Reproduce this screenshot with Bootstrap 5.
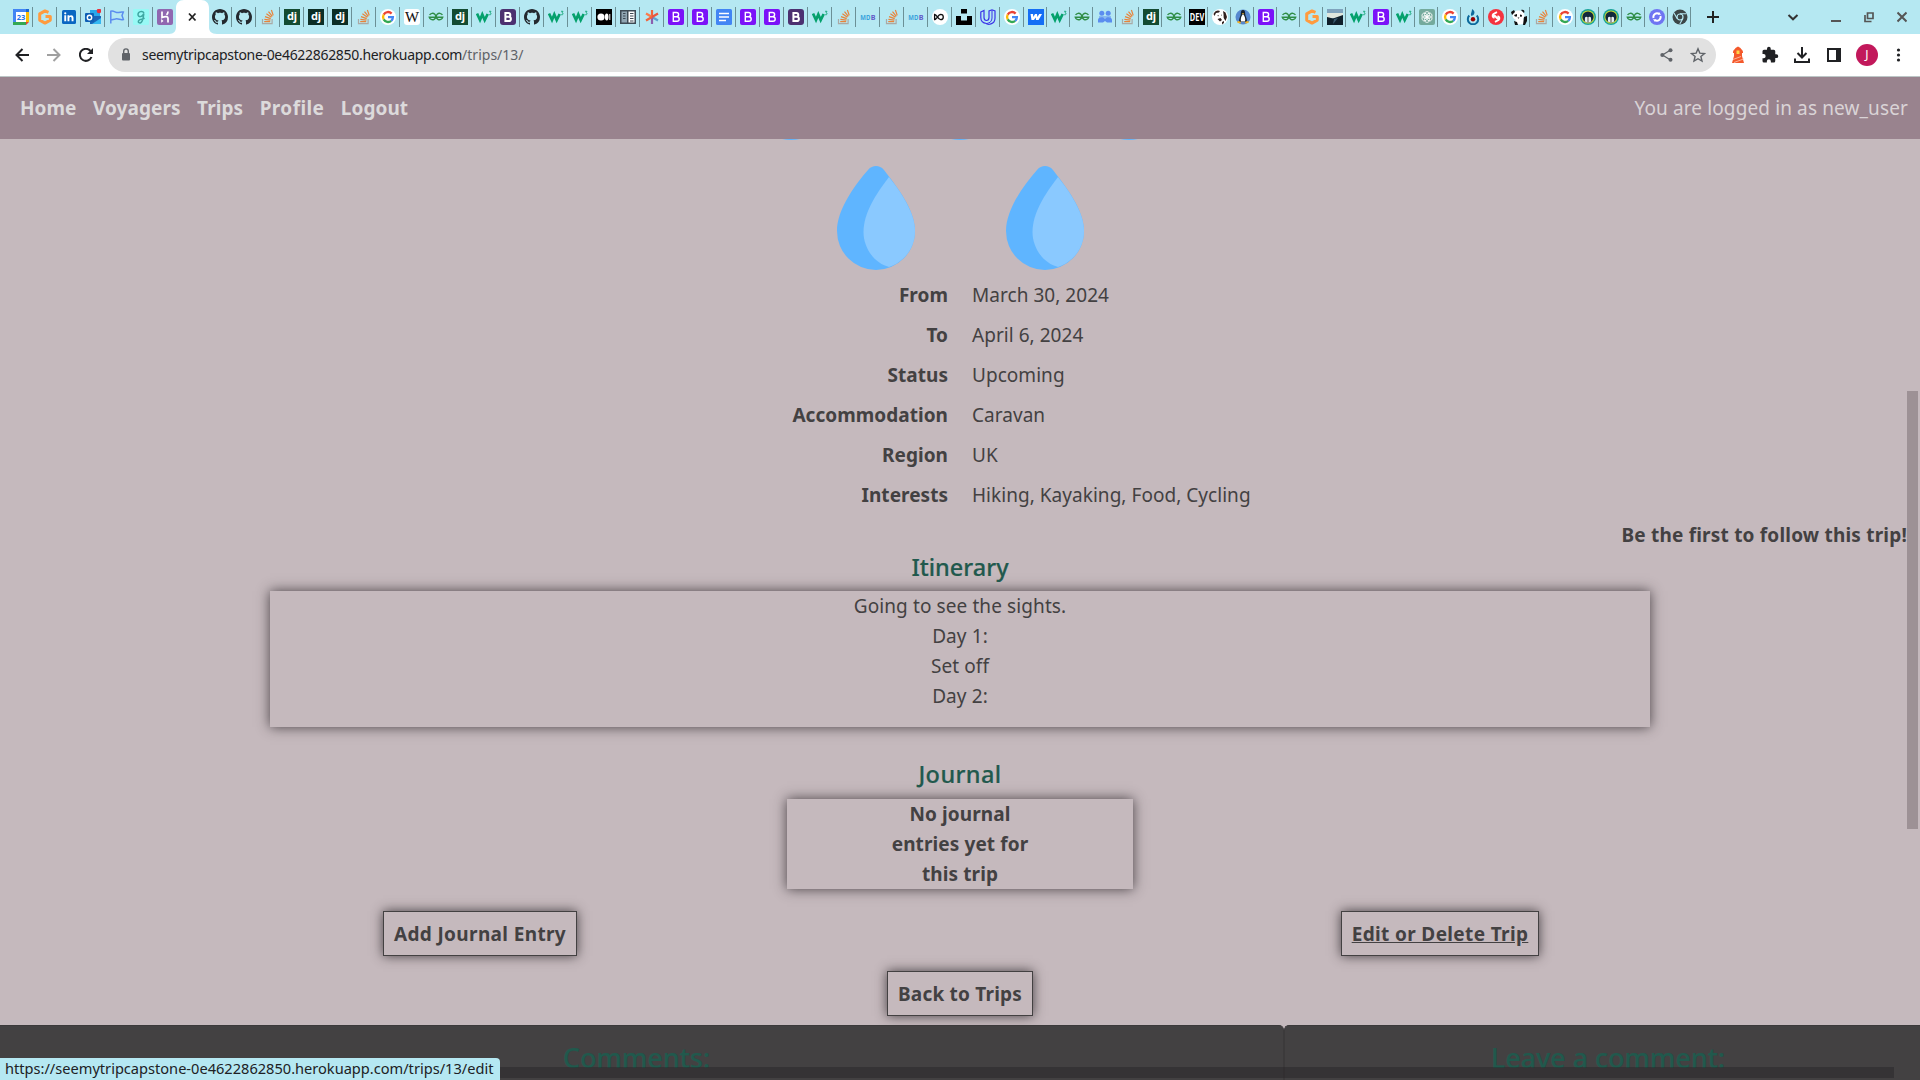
<!DOCTYPE html>
<html lang="en">
<head>
<meta charset="utf-8">
<title>See My Trip</title>
<link href="https://cdn.jsdelivr.net/npm/bootstrap@5.3.0/dist/css/bootstrap.min.css" rel="stylesheet">
<style>
:root{--ink:#434142;--page:#c5b9bd;--plum:#99838e;--pine:#21594d;--strip:#b5e8f2}
body{font-family:"Noto Sans","Open Sans",sans-serif;font-size:19px;line-height:30px;color:var(--ink);background:var(--page);height:1080px}
.tabstrip{height:34px;background:var(--strip);padding-left:9px}
.tb{width:24px;height:20px;margin-top:7px;padding-left:4px;border-right:1px solid #6b9096;flex:none;line-height:0}
.tb.nb{border-color:transparent}
.tb.sm{width:23px;padding-left:3.5px}
.tb svg{width:16px;height:16px;margin-top:2px}
.tabon{width:31px;height:34px;flex:none}
.tabon svg{margin-left:-8px}
.plus{margin-left:14px;margin-top:9px}
.win{margin-top:9px;margin-left:auto;margin-right:13px;gap:23px}
.bar{height:43px;background:#fff;border-bottom:1px solid #bcc6c6;padding:0 15px}
.bar .navi{width:78px}
.omni{height:34px;background:#e1e1e1;border-radius:17px;width:1608px;margin-left:15px;padding:0 10px 0 12px;font-size:14px;color:#5f6368;line-height:34px}
.omni b{font-weight:400;color:#202124;letter-spacing:-.31px}
.tools{gap:14px;margin-left:13px}
.ava{width:22px;height:22px;border-radius:50%;background:#c2185b;color:#fff;font-size:12px;line-height:22px;margin-left:-1px}
.sitenav{height:62px;background:var(--plum);padding:0 12px 0 20px;color:#d9d3d6;letter-spacing:.12px}
.sitenav a{color:#dcdadb;font-weight:700;text-decoration:none;letter-spacing:.06px}
.links{gap:16.5px}
.links .wide{letter-spacing:.4px}
.view{height:941px;overflow:hidden}
.drops{height:131px;overflow:hidden}
.drops>div{gap:91px;margin-top:26px}
.facts{padding-top:5px;letter-spacing:.04px}
.facts dt,.facts dd{height:40px;line-height:40px;margin:0;padding:0 12px}
.follow{padding:5px 13px 3px 0;letter-spacing:.2px}
.pine{color:var(--pine);font-weight:500;-webkit-text-stroke:.2px var(--pine);font-size:23.5px;line-height:29px;margin:0 0 9px}
.shade{box-shadow:0 0 12px rgba(40,34,37,.8)}
.plan{width:1380px;height:136px;margin-bottom:33px;letter-spacing:.1px}
.plan+.pine{margin-bottom:10px;letter-spacing:.4px}
.jour{width:346px;height:90px;margin-bottom:22px;letter-spacing:.1px}
.tripbtn{border:1px solid var(--ink);border-radius:0;padding:7px 10px 6px;font-size:19px;line-height:30px;font-weight:700;color:var(--ink);letter-spacing:.36px;box-shadow:0 0 11px rgba(40,34,37,.8)}
.backrow{padding:15px 0 9px}
.backrow .tripbtn{letter-spacing:.2px}
.darkpane{background:#434142;height:70px;border:1px solid #3c3a3b;padding-top:15px}
.darkpane .pine{font-size:27px;line-height:34px;letter-spacing:-.08px}
.pane-a{width:1284px;padding-right:10px;border-left:0;border-top-right-radius:5px}
.pane-b{width:636px;padding-left:11px;border-right:0;border-top-left-radius:5px}
.vbar{right:2px;top:391px;width:11px;height:438px;background:#9d9195}
.hbar{left:0;top:1067px;width:1894px;height:11px;background:rgba(38,36,37,.45)}
.bubble{left:0;bottom:0;width:500px;height:22px;background:var(--strip);border-radius:0 4px 0 0;font-size:14.6px;line-height:20px;color:#202124;padding-left:5px}
</style>
</head>
<body class="overflow-hidden position-relative">
<svg class="d-none">
<symbol id="gh" viewBox="0 0 16 16"><path fill="#24292f" d="M8 0C3.58 0 0 3.58 0 8c0 3.54 2.29 6.53 5.47 7.59.4.07.55-.17.55-.38 0-.19-.01-.82-.01-1.49-2.01.37-2.53-.49-2.69-.94-.09-.23-.48-.94-.82-1.13-.28-.15-.68-.52-.01-.53.63-.01 1.08.58 1.23.82.72 1.21 1.87.87 2.33.66.07-.52.28-.87.51-1.07-1.78-.2-3.64-.89-3.64-3.95 0-.87.31-1.59.82-2.15-.08-.2-.36-1.02.08-2.12 0 0 .67-.21 2.2.82.64-.18 1.32-.27 2-.27s1.36.09 2 .27c1.53-1.04 2.2-.82 2.2-.82.44 1.1.16 1.92.08 2.12.51.56.82 1.27.82 2.15 0 3.07-1.87 3.75-3.65 3.95.29.25.54.73.54 1.48 0 1.07-.01 1.93-.01 2.2 0 .21.15.46.55.38A8 8 0 0 0 16 8c0-4.42-3.58-8-8-8z"/></symbol>
<symbol id="so" viewBox="0 0 16 16"><path d="M2.500 10v4.600h9.600V10" fill="none" stroke="#aaa9a5" stroke-width="1.200"/><path d="M4.200 12.600h6M4.400 10.300l6 .8M5 7.600l5.700 2M6.400 4.800l5 3.400M8.500 2.600l3.800 4.700M11.400 1l1.800 5.400" fill="none" stroke="#e8833a" stroke-width="1.200"/></symbol>
<symbol id="dj" viewBox="0 0 16 16"><path fill="#144b32" d="M0 0h16v16H0z"/><text x="8" y="11.300" font-size="11" font-weight="700" fill="#fff" text-anchor="middle">dj</text></symbol>
<symbol id="djd" viewBox="0 0 16 16"><path fill="#0c2e26" d="M0 0h16v16H0z"/><text x="8" y="11.300" font-size="11" font-weight="700" fill="#fff" text-anchor="middle">dj</text></symbol>
<symbol id="gg" viewBox="0 0 16 16"><circle cx="8" cy="8" r="8" fill="#fff"/><g fill="none" stroke-width="2.300"><path stroke="#ea4335" d="M3.700 5.600A4.900 4.900 0 0 1 11.600 4.600"/><path stroke="#fbbc05" d="M3.700 5.600a4.900 4.900 0 0 0 0 4.800"/><path stroke="#34a853" d="M3.700 10.400a4.900 4.900 0 0 0 7.500 1.400"/><path stroke="#4285f4" d="M11.200 11.800A4.900 4.900 0 0 0 12.900 8.200H8"/></g></symbol>
<symbol id="wk" viewBox="0 0 16 16"><rect width="16" height="16" rx="3" fill="#fff"/><text x="1" y="12.800" font-size="14" font-family="Liberation Serif" textLength="14" lengthAdjust="spacingAndGlyphs" fill="#111" stroke="#111" stroke-width=".1">W</text></symbol>
<symbol id="gf" viewBox="0 0 16 16"><path d="M1.600 6A3.300 3.200 0 1 1 1.300 8.300H14.700A3.300 3.200 0 1 1 14.400 6" fill="none" stroke="#2f8d46" stroke-width="1.400"/></symbol>
<symbol id="w3" viewBox="0 0 16 16"><path d="M1 4.500l3 6.500 2.300-5.500 2.400 5.500 3-6" fill="none" stroke="#04a16c" stroke-width="2.700"/><path d="M13 2.300h2l-1 1.500c1.700.1 1.500 2.500-.9 1.900" fill="none" stroke="#04a16c" stroke-width=".8"/></symbol>
<symbol id="bs" viewBox="0 0 16 16"><rect width="16" height="16" rx="2" fill="#7b12f8"/><path d="M5.300 3.500h3.200a2 2 0 0 1 0 4.200H5.300zm0 4.200h3.600a2.200 2.200 0 0 1 0 4.600H5.300z" fill="none" stroke="#fff" stroke-width="1.400"/></symbol>
<symbol id="bd" viewBox="0 0 16 16"><rect width="16" height="16" rx="3" fill="#4c3070"/><path d="M5.400 4h3a1.900 1.900 0 0 1 0 3.800h-3zm0 3.800h3.400a2.100 2.100 0 0 1 0 4.200H5.400z" fill="none" stroke="#fff" stroke-width="2"/></symbol>
<symbol id="gp" viewBox="0 0 16 16"><path d="M11.500 3.300L8 1.900 2.700 4.900v6.200L8 14.100l5.300-3V7.600H8.500" fill="none" stroke="#ff9b3e" stroke-width="3" stroke-linejoin="round"/></symbol>
<symbol id="mdb" viewBox="0 0 16 16"><text x=".3" y="10.700" font-size="7.500" font-weight="700" textLength="10" lengthAdjust="spacingAndGlyphs" fill="#3ba3dc">MD</text><text x="10.800" y="10.700" font-size="7.500" font-weight="700" textLength="4.800" lengthAdjust="spacingAndGlyphs" fill="#6358c8">B</text></symbol>
<symbol id="tux" viewBox="0 0 16 16"><circle cx="8" cy="8" r="8" fill="#1aa39a"/><circle cx="8" cy="8" r="6.600" fill="#c5d936"/><circle cx="8" cy="8" r="5.600" fill="#12283c"/><path d="M4.900 12.500V10C4.900 8 6 7 8 8.500c2-1.500 3.100-.5 3.100 1.500v2.500A6 6 0 0 1 8 13.500a6 6 0 0 1-3.100-1z" fill="#e8f1f4"/><path d="M7.200 8h1.600v5.500H7.200z" fill="#888"/></symbol>
<symbol id="drop" viewBox="0 0 78 104"><path fill="#5fb5ff" d="M39 0c3 0 5.500 1 8 4 14 18 31 40 31 61a39 39 0 0 1-78 0C0 44 17 20 31 4c2.500-3 5-4 8-4z"/><path fill="#8ac9ff" d="M52 11c12 15 26 36 26 54 0 17-11 31-26 36C37 97 26.500 82 26.500 66c0-19 12.500-38 25.500-55z"/></symbol>
</svg>

<header class="tabstrip d-flex align-items-start">
<div class="tb"><svg viewBox="0 0 16 16"><path fill="#4285f4" d="M0 0h13v3H0zM0 0h3v16H0z"/><path fill="#1967d2" d="M13 0h3v3h-3z"/><path fill="#fbbc04" d="M13 3h3v10h-3z"/><path fill="#34a853" d="M0 13h13v3H0z"/><path fill="#ea4335" d="M13 13h3l-3 3z"/><path fill="#fff" d="M3 3h10v10H3z"/><text x="8" y="10.800" font-size="7.500" font-weight="700" text-anchor="middle" fill="#1a73e8">23</text></svg></div>
<div class="tb"><svg><use href="#gp"/></svg></div>
<div class="tb"><svg viewBox="0 0 16 16"><rect x="1" y="1" width="14" height="14" rx="1.500" fill="#0a66c2"/><path fill="#fff" d="M3.300 6.300h1.900v6H3.300zM6.500 6.300h1.800v.8c1-1.500 4.200-1.300 4.200 1.700v3.500h-1.900V9.200c0-1.600-2.200-1.500-2.200 0v3.100H6.500z"/><circle cx="4.250" cy="4.300" r="1.100" fill="#fff"/></svg></div>
<div class="tb"><svg viewBox="0 0 16 16"><path fill="#28a8ea" d="M5 1h10v13H5z"/><path fill="#1a65b8" d="M5 7l11 0v8H5z"/><path fill="#35b8f1" d="M7 15l9-6v6z"/><rect y="4" width="9" height="9" rx="1" fill="#0f5fb5"/><circle cx="4.500" cy="8.500" r="2.200" fill="none" stroke="#fff" stroke-width="1.400"/><circle cx="14" cy="2" r="2.300" fill="#e8313e"/></svg></div>
<div class="tb"><svg viewBox="0 0 16 16"><path d="M1.800 14.500V2.300c3-1.200 5 2 8 1.200 1.800-.7 3-.7 4.500-.4L13 6.500l1.400 4c-3 1-5-1.300-8-.5l-4.500 1" fill="none" stroke="#5b8def" stroke-width="1.500"/></svg></div>
<div class="tb"><svg viewBox="0 0 16 16"><rect width="16" height="16" rx="1" fill="#97f9f5"/><path d="M11 4C9.500 1.300 5 2.500 5 5.500s4.500 3 5.800-1C10.500 8 10 11 8.500 13c-1.500 2-4.500.5-2.500-1.700 1.500-1.300 3.500-1 5.500-2.300" fill="none" stroke="#3fa7a2" stroke-width="1.500"/></svg></div>
<div class="tb nb"><svg viewBox="0 0 16 16"><rect width="16" height="16" rx="2" fill="#9067b0"/><path d="M5 2.500v6c3-1.300 6-1.500 6 1v4M11 2.500c0 1.500-.5 2.300-1.500 3.300" fill="none" stroke="#fff" stroke-width="1.700"/><path fill="#fff" d="M4.200 10l2.300 1.900-2.300 1.900z"/></svg></div>
<div class="tabon"><svg width="48" height="34" viewBox="0 0 48 34"><path fill="#fff" d="M0 34c5 0 7-3 7-7V8c0-5 3-8 8-8h17c5 0 8 3 8 8v19c0 4 2 7 8 7z"/><path d="M20 13.500l6.500 7M26.500 13.500l-6.500 7" stroke="#222" stroke-width="1.800"/></svg></div>
<div class="tb"><svg><use href="#gh"/></svg></div><div class="tb"><svg><use href="#gh"/></svg></div><div class="tb"><svg><use href="#so"/></svg></div><div class="tb"><svg><use href="#dj"/></svg></div><div class="tb"><svg><use href="#djd"/></svg></div><div class="tb"><svg><use href="#djd"/></svg></div><div class="tb"><svg><use href="#so"/></svg></div><div class="tb"><svg><use href="#gg"/></svg></div><div class="tb"><svg><use href="#wk"/></svg></div><div class="tb"><svg><use href="#gf"/></svg></div><div class="tb"><svg><use href="#dj"/></svg></div><div class="tb"><svg><use href="#w3"/></svg></div><div class="tb"><svg><use href="#bd"/></svg></div><div class="tb"><svg><use href="#gh"/></svg></div><div class="tb"><svg><use href="#w3"/></svg></div><div class="tb"><svg><use href="#w3"/></svg></div>
<div class="tb"><svg viewBox="0 0 16 16"><path d="M0 0h16v16H0z"/><circle cx="5" cy="8" r="3.600" fill="#fff"/><ellipse cx="10.700" cy="8" rx="1.800" ry="3.400" fill="#fff"/><path fill="#fff" d="M13.300 5h1v6h-1z"/></svg></div>
<div class="tb"><svg viewBox="0 0 16 16"><path fill="#3d4a54" d="M0 1h16v14H0z"/><path fill="#90a5b2" d="M1.500 2.500H7v11H1.500z"/><path fill="#fff" d="M8.500 2.500h6v11h-6z"/><path d="M3 4.500h2.500M3 7h2.500M3 9.500h2.500M10 4.500h3.500M10 7h3.500M10 9.500h3.500M10 12h3.500" stroke="#3d4a54" stroke-width="1.200"/></svg></div>
<div class="tb"><svg viewBox="0 0 16 16"><g stroke-width="2.200"><path stroke="#f0643c" d="M8 8V1"/><path stroke="#fb7a4b" d="M8 8L2 4.500"/><path stroke="#5fa0d0" d="M8 8l6 3.500"/><path stroke="#8b5fae" d="M8 8v7"/><path stroke="#e8553e" d="M8 8l6-3.500"/><path stroke="#f0643c" d="M8 8l-6 3.500"/></g></svg></div>
<div class="tb"><svg><use href="#bs"/></svg></div><div class="tb"><svg><use href="#bs"/></svg></div>
<div class="tb"><svg viewBox="0 0 16 16"><rect width="16" height="16" rx="1.500" fill="#4285f4"/><path d="M3 4.500h10M3 8h10M3 11.500h7" stroke="#fff" stroke-width="1.600"/></svg></div>
<div class="tb"><svg><use href="#bs"/></svg></div><div class="tb"><svg><use href="#bs"/></svg></div><div class="tb"><svg><use href="#bd"/></svg></div><div class="tb"><svg><use href="#w3"/></svg></div><div class="tb"><svg><use href="#so"/></svg></div><div class="tb"><svg><use href="#mdb"/></svg></div><div class="tb"><svg><use href="#so"/></svg></div><div class="tb"><svg><use href="#mdb"/></svg></div>
<div class="tb"><svg viewBox="0 0 16 16"><circle cx="8" cy="8" r="8" fill="#fff"/><path d="M2.600 5.500v5c2.400 0 3.200-5 6-5.200a2.700 2.700 0 1 1 0 5.400C5.800 10.500 5 5.500 2.600 5.500z" fill="none" stroke="#111" stroke-width="1.300"/></svg></div>
<div class="tb"><svg viewBox="0 0 16 16"><path d="M5 0h6v4.500H5zM0 7h5v4.500h6V7h5v9H0z"/></svg></div>
<div class="tb"><svg viewBox="0 0 16 16"><path d="M.8 3L4 1.500v7c0 4 5 4 5 0V2L12 .8l3 1.200v7c0 7-8 7-8.500 5.500C2 14 .8 11.500.8 8.500z" fill="none" stroke="#3a32e8" stroke-width="1.200"/><path d="M12 1v8c0 3-2 5-5 5.500" fill="none" stroke="#3a32e8"/></svg></div>
<div class="tb"><svg><use href="#gg"/></svg></div>
<div class="tb sm"><svg viewBox="0 0 16 16"><path fill="#146ef5" d="M0 0h16v16H0z"/><path fill="#fff" d="M2.500 5h2.500l.4 3L7 5h2l.4 3 1.800-3h2.800l-3.500 6H8l-.3-2.500L6 11H3.500z"/></svg></div>
<div class="tb sm"><svg><use href="#w3"/></svg></div><div class="tb sm"><svg><use href="#gf"/></svg></div>
<div class="tb sm"><svg viewBox="0 0 16 16" fill="#5b8def"><circle cx="4.800" cy="4.300" r="2.500"/><circle cx="11.200" cy="4.300" r="2.500"/><path d="M1 13.500V11c0-3.500 6-3.500 7-1 1-2.500 7-2.500 7 1v2.500H10L8 12l-2 1.500z"/><path d="M2 7.500h12v1H2z"/></svg></div>
<div class="tb sm"><svg><use href="#so"/></svg></div><div class="tb sm"><svg><use href="#dj"/></svg></div><div class="tb sm"><svg><use href="#gf"/></svg></div>
<div class="tb sm"><svg viewBox="0 0 16 16"><path d="M0 0h16v16H0z"/><text x=".8" y="11.800" font-size="10" font-weight="700" textLength="14.400" lengthAdjust="spacingAndGlyphs" fill="#fff">DEV</text></svg></div>
<div class="tb sm"><svg viewBox="0 0 16 16"><circle cx="8" cy="8" r="8" fill="#fff"/><path fill="#30221f" d="M1.500 5C3 1.500 6 .8 8 2L7 3.500 4 4 2.500 7zM11 2l2.500 1.500L15 8l-1.500 4-1.800-3L11.500 5zM5.500 6l1.500.5-1 1zM9 5.500l1 .5-.5 1zM5.500 10l3-1 1.500 2-2 1.500zM10 13l2-1v2l-2 1.500z"/></svg></div>
<div class="tb sm"><svg viewBox="0 0 16 16"><circle cx="8" cy="8" r="7.500" fill="#5688cf"/><path fill="#17212e" d="M8 1c2 0 2.200 2 2.200 4s2 4 1.800 8H4c-.2-4 1.800-6 1.800-8S6 1 8 1z"/><path fill="#fff" d="M8 5c1.500 2 2.800 4 2 7.500H6C5.200 9 6.500 7 8 5z"/><path fill="#f4b321" d="M2.500 12l3 .5.5 2-3.500-.5zM13.500 12l-3 .5-.5 2 3.500-.5zM7 4h2l-1 1.500z"/></svg></div>
<div class="tb sm"><svg><use href="#bs"/></svg></div><div class="tb sm"><svg><use href="#gf"/></svg></div><div class="tb sm"><svg><use href="#gp"/></svg></div>
<div class="tb sm"><svg viewBox="0 0 16 16"><path fill="#7fa3bd" d="M0 0h16v16H0z"/><path fill="#dfe6dd" d="M0 4h16v5H0z"/><path fill="#10202b" d="M0 8l6 1.500L16 6v10H0z"/><path fill="#3a5a70" d="M7 10l4-1-5 6z"/></svg></div>
<div class="tb sm"><svg><use href="#w3"/></svg></div><div class="tb sm"><svg><use href="#bs"/></svg></div><div class="tb sm"><svg><use href="#w3"/></svg></div>
<div class="tb sm"><svg viewBox="0 0 16 16"><rect width="16" height="16" rx="2" fill="#74aa9c"/><g fill="none" stroke="#fff" stroke-width=".8"><ellipse cx="8" cy="5.500" rx="2.500" ry="3"/><ellipse cx="8" cy="5.500" rx="2.500" ry="3" transform="rotate(60 8 8)"/><ellipse cx="8" cy="5.500" rx="2.500" ry="3" transform="rotate(120 8 8)"/><ellipse cx="8" cy="5.500" rx="2.500" ry="3" transform="rotate(180 8 8)"/><ellipse cx="8" cy="5.500" rx="2.500" ry="3" transform="rotate(240 8 8)"/><ellipse cx="8" cy="5.500" rx="2.500" ry="3" transform="rotate(300 8 8)"/></g></svg></div>
<div class="tb sm"><svg><use href="#gg"/></svg></div>
<div class="tb sm"><svg viewBox="0 0 16 16"><path d="M4.300 6.500a5.200 5.200 0 1 0 7.400 0" fill="none" stroke="#0c6a9c" stroke-width="2"/><circle cx="8" cy="10.300" r="2.200" fill="#900"/><path fill="#0c6a9c" d="M7 0c3 2 3 4 1.500 6L6.500 7C5 5 7 3.500 7 0z"/></svg></div>
<div class="tb sm"><svg viewBox="0 0 16 16"><circle cx="8" cy="8" r="8" fill="#f5333f"/><path d="M9 3.200L5.500 5C4 6.500 4.500 8.300 6.500 8.800M7 12.800L10.500 11c1.500-1.500 1-3.300-1-3.800M5.500 5.500l5 5" fill="none" stroke="#fff" stroke-width="1.900"/></svg></div>
<div class="tb sm"><svg viewBox="0 0 16 16"><ellipse cx="7.500" cy="6.500" rx="6" ry="5" fill="#fff"/><ellipse cx="9" cy="12.500" rx="5" ry="3" fill="#fff"/><path fill="#111" d="M0 3l3-2 1 2-3 3zM10 1c3-1 4 1 3 3zM3 6l3-1v2.500H4zM9 5.500l2 .5-.5 2L9 7.500zM6.500 8.500h2l-1 1.200zM13 8l3-1v5l-2 4h-2zM3 12l3 1 1 3H4z"/></svg></div>
<div class="tb sm"><svg><use href="#so"/></svg></div><div class="tb sm"><svg><use href="#gg"/></svg></div><div class="tb sm"><svg><use href="#tux"/></svg></div><div class="tb sm"><svg><use href="#tux"/></svg></div><div class="tb sm"><svg><use href="#gf"/></svg></div>
<div class="tb sm"><svg viewBox="0 0 16 16"><circle cx="8" cy="8" r="8" fill="#6f74f2"/><path d="M4.500 9A3.700 3.700 0 0 1 10 4.900M11.500 7A3.700 3.700 0 0 1 6 11.100" fill="none" stroke="#fff" stroke-width="1.900"/><path fill="#fff" d="M10 3l2 2.800H9zM6 13L4 10.200h3z"/></svg></div>
<div class="tb sm"><svg viewBox="0 0 16 16"><circle cx="8" cy="8" r="7.500" fill="#3c4748"/><circle cx="8" cy="8" r="3" fill="none" stroke="#b5e8f2" stroke-width="1.200"/><path d="M8 4.700h6.500M5.100 9.600L2 4M10.900 9.600L7.800 15" stroke="#b5e8f2" stroke-width="1.100"/></svg></div>
<svg class="plus" width="16" height="16" viewBox="0 0 16 16"><path d="M8 2v12M2 8h12" stroke="#222" stroke-width="2"/></svg>
<div class="win d-flex">
<svg class="me-2" width="14" height="16" viewBox="0 0 14 16"><path d="M2.500 6L7 10.300 11.500 6" fill="none" stroke="#333" stroke-width="2"/></svg>
<svg width="10" height="16" viewBox="0 0 10 16"><path d="M0 12h10" stroke="#555" stroke-width="2"/></svg>
<svg width="10" height="16" viewBox="0 0 10 16"><path d="M3.500 4h5.500v5.500H3.500zM1 6v6.500h6.500" fill="none" stroke="#555" stroke-width="1.700"/></svg>
<svg width="10" height="16" viewBox="0 0 10 16"><path d="M.5 3.500l9 9M9.500 3.500l-9 9" stroke="#555" stroke-width="2"/></svg>
</div>
</header>

<div class="bar d-flex align-items-center">
<div class="navi d-flex justify-content-between flex-shrink-0">
<svg width="14" height="14" viewBox="0 0 14 14" fill="none" stroke="#202124" stroke-width="2"><path d="M14 7H1.500M7.500 1L1.500 7l6 6"/></svg>
<svg width="14" height="14" viewBox="0 0 14 14" fill="none" stroke="#a0a0a0" stroke-width="2"><path d="M0 7h12.500M6.500 1l6 6-6 6"/></svg>
<svg width="14" height="14" viewBox="0 0 14 14"><path d="M12.500 9A6 6 0 1 1 11.500 3" fill="none" stroke="#202124" stroke-width="2"/><path d="M14 0v6H8z" fill="#202124"/></svg>
</div>
<div class="omni d-flex align-items-center flex-shrink-0">
<svg class="flex-shrink-0" width="22" height="14" viewBox="0 0 22 14"><rect x="2" y="5" width="8" height="7.500" rx="1" fill="#5f6368"/><path d="M3.700 5V3.200a2.300 2.300 0 0 1 4.600 0V5" fill="none" stroke="#5f6368" stroke-width="1.400"/></svg>
<span><b>seemytripcapstone-0e4622862850.herokuapp.com</b>/trips/13/</span>
<svg class="ms-auto me-3" width="14" height="14" viewBox="0 0 14 14"><path d="M10.500 2L2.500 7l8 5" fill="none" stroke="#5f6368" stroke-width="1.300"/><g fill="#5f6368"><circle cx="10.500" cy="2.300" r="2"/><circle cx="2.300" cy="7" r="2"/><circle cx="10.500" cy="11.700" r="2"/></g></svg>
<svg width="16" height="16" viewBox="0 0 16 16"><path d="M8 1.800l1.800 4.300 4.700.4-3.600 3 1.100 4.600L8 11.700l-4 2.400 1.100-4.600-3.600-3 4.700-.4z" fill="none" stroke="#5f6368" stroke-width="1.400"/></svg>
</div>
<div class="tools d-flex align-items-center flex-shrink-0">
<svg width="18" height="18" viewBox="0 0 18 18"><path fill="#f4592b" d="M4 6C4 4 6 3.500 6.500 2L9 .5 11.500 2c.5 1.500 2.500 2 2.500 4v1H4zM5 7h8v3H5zM5 10h8l2 7H3z"/><path fill="#ffd54a" d="M7.500 4.500h3v3.500h-3z"/><path d="M4 13.500l8-3M5 16.500l9.500-3.500" stroke="#ffb199" stroke-width="1"/></svg>
<svg width="18" height="18" viewBox="0 0 24 24"><path fill="#202124" d="M20.500 11H19V7a2 2 0 0 0-2-2h-4V3.500a2.500 2.500 0 0 0-5 0V5H4a2 2 0 0 0-2 2v3.800h1.500a2.700 2.700 0 0 1 0 5.400H2V20a2 2 0 0 0 2 2h3.800v-1.500a2.700 2.700 0 0 1 5.400 0V22H17a2 2 0 0 0 2-2v-4h1.500a2.500 2.500 0 0 0 0-5z"/></svg>
<svg width="18" height="18" viewBox="0 0 18 18"><path d="M9 1v10M4.500 7L9 11.500 13.500 7M2 12.500V16h14v-3.500" fill="none" stroke="#202124" stroke-width="2"/></svg>
<svg width="18" height="18" viewBox="0 0 18 18"><path d="M3 3h12v12H3z" fill="none" stroke="#202124" stroke-width="2"/><path fill="#202124" d="M11 3h4v12h-4z"/></svg>
<span class="ava text-center">J</span>
<svg width="14" height="16" viewBox="1.500 0 14 16" fill="#202124"><circle cx="8" cy="3" r="1.600"/><circle cx="8" cy="8" r="1.600"/><circle cx="8" cy="13" r="1.600"/></svg>
</div>
</div>

<nav class="sitenav d-flex align-items-center justify-content-between">
<div class="links d-flex"><a href="#">Home</a><a href="#">Voyagers</a><a href="#">Trips</a><a href="#" class="wide">Profile</a><a href="#">Logout</a></div>
<span>You are logged in as new_user</span>
</nav>

<main class="view">
<div class="drops d-flex flex-column justify-content-end">
<div class="d-flex justify-content-center"><svg width="78" height="104"><use href="#drop"/></svg><svg width="78" height="104"><use href="#drop"/></svg><svg width="78" height="104"><use href="#drop"/></svg></div>
<div class="d-flex justify-content-center"><svg width="78" height="104"><use href="#drop"/></svg><svg width="78" height="104"><use href="#drop"/></svg></div>
</div>
<dl class="facts row g-0 mb-0">
<dt class="col-6 text-end">From</dt><dd class="col-6">March 30, 2024</dd>
<dt class="col-6 text-end">To</dt><dd class="col-6">April 6, 2024</dd>
<dt class="col-6 text-end">Status</dt><dd class="col-6">Upcoming</dd>
<dt class="col-6 text-end">Accommodation</dt><dd class="col-6">Caravan</dd>
<dt class="col-6 text-end">Region</dt><dd class="col-6">UK</dd>
<dt class="col-6 text-end">Interests</dt><dd class="col-6">Hiking, Kayaking, Food, Cycling</dd>
</dl>
<p class="follow text-end fw-bold mb-0">Be the first to follow this trip!</p>
<h2 class="pine text-center">Itinerary</h2>
<section class="plan shade mx-auto text-center">Going to see the sights.<br>Day 1:<br>Set off<br>Day 2:</section>
<h2 class="pine text-center">Journal</h2>
<section class="jour shade mx-auto text-center fw-bold">No journal<br>entries yet for<br>this trip</section>
<div class="row g-0"><div class="col-6 d-flex justify-content-center"><a href="#" class="btn tripbtn">Add Journal Entry</a></div><div class="col-6 d-flex justify-content-center"><a href="#" class="btn tripbtn text-decoration-underline">Edit or Delete Trip</a></div></div>
<div class="backrow d-flex justify-content-center"><a href="#" class="btn tripbtn">Back to Trips</a></div>
<div class="d-flex text-center"><section class="darkpane pane-a"><h2 class="pine">Comments:</h2></section><section class="darkpane pane-b"><h2 class="pine">Leave a comment:</h2></section></div>
</main>
<div class="vbar position-absolute"></div><div class="hbar position-absolute"></div>
<div class="bubble position-absolute">https://seemytripcapstone-0e4622862850.herokuapp.com/trips/13/edit</div>
<script src="https://cdn.jsdelivr.net/npm/bootstrap@5.3.0/dist/js/bootstrap.bundle.min.js"></script>
</body>
</html>
